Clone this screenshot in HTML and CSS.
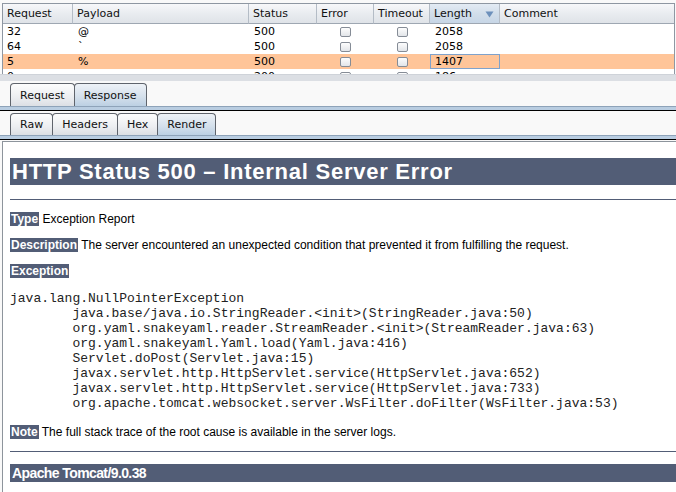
FILE: index.html
```html
<!DOCTYPE html>
<html>
<head>
<meta charset="utf-8">
<title>Intruder result</title>
<link rel="stylesheet" href="styles.css">
</head>
<body>
<div class="app">
  <div class="results">
    <div class="grid">
      <div class="hd">Request</div>
      <div class="hd">Payload</div>
      <div class="hd">Status</div>
      <div class="hd">Error</div>
      <div class="hd">Timeout</div>
      <div class="hd sorted">Length<svg class="arrow" width="9" height="7" viewBox="0 0 9 7"><path d="M0.5 0.5 H8.5 L4.5 6.5 Z" fill="#6d90bb"/></svg></div>
      <div class="hd last">Comment</div>

      <div class="cell">32</div><div class="cell">@</div><div class="cell">500</div>
      <div class="cell ck"><span class="box"></span></div><div class="cell ck"><span class="box"></span></div>
      <div class="cell">2058</div><div class="cell"></div>

      <div class="cell">64</div><div class="cell">`</div><div class="cell">500</div>
      <div class="cell ck"><span class="box"></span></div><div class="cell ck"><span class="box"></span></div>
      <div class="cell">2058</div><div class="cell"></div>

      <div class="cell hl">5</div><div class="cell hl">%</div><div class="cell hl">500</div>
      <div class="cell hl ck"><span class="box"></span></div><div class="cell hl ck"><span class="box"></span></div>
      <div class="cell hl focus">1407</div><div class="cell hl"></div>

      <div class="cell">0</div><div class="cell"></div><div class="cell">200</div>
      <div class="cell ck"><span class="box"></span></div><div class="cell ck"><span class="box"></span></div>
      <div class="cell">186</div><div class="cell"></div>
    </div>
  </div>
  <div class="splitter"></div>

  <div class="strip">
    <div class="tabs">
      <div class="tab">Request</div>
      <div class="tab sel">Response</div>
    </div>
    <div class="band"></div>
  </div>

  <div class="strip small">
    <div class="tabs">
      <div class="tab">Raw</div>
      <div class="tab">Headers</div>
      <div class="tab">Hex</div>
      <div class="tab sel">Render</div>
    </div>
    <div class="band"></div>
  </div>

  <div class="render">
    <h1>HTTP Status 500 – Internal Server Error</h1>
    <hr class="line">
    <p class="first"><b>Type</b> Exception Report</p>
    <p><b>Description</b> The server encountered an unexpected condition that prevented it from fulfilling the request.</p>
    <p><b>Exception</b></p>
<pre>java.lang.NullPointerException
	java.base/java.io.StringReader.&lt;init&gt;(StringReader.java:50)
	org.yaml.snakeyaml.reader.StreamReader.&lt;init&gt;(StreamReader.java:63)
	org.yaml.snakeyaml.Yaml.load(Yaml.java:416)
	Servlet.doPost(Servlet.java:15)
	javax.servlet.http.HttpServlet.service(HttpServlet.java:652)
	javax.servlet.http.HttpServlet.service(HttpServlet.java:733)
	org.apache.tomcat.websocket.server.WsFilter.doFilter(WsFilter.java:53)
</pre>
    <p class="note"><b>Note</b> The full stack trace of the root cause is available in the server logs.</p>
    <hr class="line bottom">
    <h3>Apache Tomcat/9.0.38</h3>
  </div>
</div>
</body>
</html>
```

FILE: styles.css
```css
html, body {
  margin: 0;
  padding: 0;
}
body {
  width: 676px;
  height: 492px;
  overflow: hidden;
  background: #f9f9f9;
  font-family: "DejaVu Sans", sans-serif;
  font-size: 11px;
  color: #000;
}
.app {
  width: 676px;
  height: 492px;
  overflow: hidden;
  display: flex;
  flex-direction: column;
}

/* results table */
.results {
  margin: 3px 1px 0 2px;
  border-top: 1px solid #8e97a2;
  border-left: 1px solid #8e97a2;
  border-right: 1px solid #8e97a2;
  height: 70px;
  overflow: hidden;
  background: #fff;
  flex: none;
}
.grid {
  display: grid;
  grid-template-columns: 70px 176px 68px 57px 56px 70px 1fr;
  grid-auto-rows: 15px;
  grid-template-rows: 20px;
}
.hd {
  background: linear-gradient(#f7f8fa, #e9ecf0 50%, #dfe3e8);
  border-right: 1px solid #b4bcc6;
  border-bottom: 1px solid #9ea7b2;
  padding-left: 4px;
  line-height: 19px;
  color: #111;
  position: relative;
}
.hd.last { border-right: none; }
.hd.sorted {
  background: linear-gradient(#e3ebf4, #d2deea 50%, #c7d6e6);
}
.arrow {
  position: absolute;
  left: 55px;
  top: 7px;
}
.cell {
  padding-left: 5px;
  line-height: 15px;
  white-space: nowrap;
}
.cell:nth-child(7n+1) { padding-left: 4px; }
.cell.hl { background: #ffc599; }
.cell.focus {
  box-shadow: inset 0 0 0 1px #7fa2cb;
}
.ck {
  padding-left: 0;
  display: flex;
  justify-content: center;
  align-items: center;
}
.box {
  width: 9px;
  height: 8px;
  border: 1px solid #858c96;
  border-radius: 2px;
  background: linear-gradient(#fdfdfd, #e2e5e9);
}

.splitter {
  height: 6px;
  background: #dcdfe4;
  border-top: 1px solid #cfd3d9;
  flex: none;
}

/* tab strips */
.strip {
  flex: none;
  padding-top: 2px;
}
.tabs {
  display: flex;
  padding-left: 10px;
  height: 23px;
}
.strip.small .tabs { height: 22px; }
.tab {
  border: 1px solid #5f646c;
  border-bottom: none;
  border-radius: 4px 4px 0 0;
  padding: 0 9px;
  margin-right: -1px;
  background: linear-gradient(#fdfdfd, #eceef1 60%, #dcdfe4);
  display: flex;
  align-items: center;
  color: #111;
}
.tab.sel {
  background: linear-gradient(#eef2f7, #d3dfeb 60%, #bcd0e3);
  padding: 0 9px;
}
.band {
  height: 3px;
  border-top: 1px solid #8ea3b9;
  border-bottom: 1px solid #000;
  background: #b9cde1;
}

/* rendered page */
.render {
  flex: 1;
  margin: 1px 0 0 2px;
  border-top: 1px solid #8d949c;
  border-left: 1px solid #8d949c;
  background: #fff;
  padding: 16px 0 0 7px;
  overflow: hidden;
  font-family: "Liberation Sans", Arial, sans-serif;
  font-size: 12px;
}
.render h1 {
  margin: 0;
  height: 27px;
  line-height: 27px;
  background: #525d76;
  color: #fff;
  font-size: 22px;
  font-weight: bold;
  letter-spacing: 0.75px;
  padding-left: 2px;
  white-space: nowrap;
}
.line {
  border: none;
  height: 1px;
  background: #525d76;
  margin: 14px 0 0;
}
.line.bottom { margin-top: 12px; }
.render p {
  margin: 12px 0 0;
  line-height: 14px;
  white-space: nowrap;
}
.render p b {
  display: inline-block;
  background: #525d76;
  color: #fff;
  line-height: 14px;
  padding: 0 1px;
}
.render pre {
  margin: 13px 0 0;
  font-family: "Liberation Mono", "Courier New", monospace;
  font-size: 13px;
  line-height: 15px;
  tab-size: 8;
  color: #222;
}
.render p.note { margin-top: 14px; }
.render h3 {
  margin: 12px 0 0;
  height: 18px;
  line-height: 18px;
  background: #525d76;
  color: #fff;
  font-size: 14px;
  font-weight: bold;
  letter-spacing: -0.6px;
  padding-left: 2px;
}
```
